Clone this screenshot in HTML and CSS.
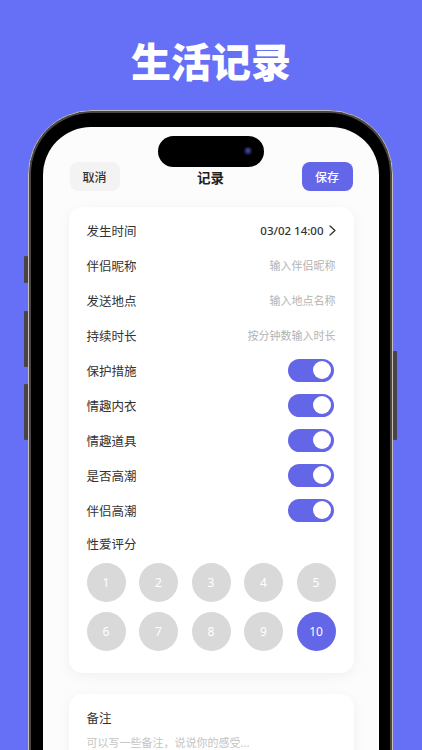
FILE: index.html
```html
<!DOCTYPE html>
<html lang="zh">
<head>
<meta charset="utf-8">
<title>生活记录</title>
<link rel="stylesheet" href="styles.css">
</head>
<body>
<header class="hero"><h1 class="hero-title">生活记录</h1></header>
<div class="phone">
  <span class="btn-side btn-l1"></span>
  <span class="btn-side btn-l2"></span>
  <span class="btn-side btn-l3"></span>
  <span class="btn-side btn-r1"></span>
  <div class="screen">
    <div class="island"><span class="cam"></span></div>
    <nav class="nav">
      <button class="nav-btn cancel">取消</button>
      <div class="nav-title">记录</div>
      <button class="nav-btn save">保存</button>
    </nav>
    <section class="card">
      <div class="row"><span class="label">发生时间</span><span class="value">03/02 14:00<svg class="chev" width="7" height="11" viewBox="0 0 7 11"><polyline points="1,1 6,5.5 1,10" fill="none" stroke="#333" stroke-width="1.3" stroke-linecap="round" stroke-linejoin="round"/></svg></span></div>
      <div class="row"><span class="label">伴侣昵称</span><span class="ph">输入伴侣昵称</span></div>
      <div class="row"><span class="label">发送地点</span><span class="ph">输入地点名称</span></div>
      <div class="row"><span class="label">持续时长</span><span class="ph">按分钟数输入时长</span></div>
      <div class="row"><span class="label">保护措施</span><span class="toggle"><span class="knob"></span></span></div>
      <div class="row"><span class="label">情趣内衣</span><span class="toggle"><span class="knob"></span></span></div>
      <div class="row"><span class="label">情趣道具</span><span class="toggle"><span class="knob"></span></span></div>
      <div class="row"><span class="label">是否高潮</span><span class="toggle"><span class="knob"></span></span></div>
      <div class="row"><span class="label">伴侣高潮</span><span class="toggle"><span class="knob"></span></span></div>
      <div class="row row-head"><span class="label">性爱评分</span></div>
      <div class="rating">
        <span class="dot">1</span><span class="dot">2</span><span class="dot">3</span><span class="dot">4</span><span class="dot">5</span>
        <span class="dot">6</span><span class="dot">7</span><span class="dot">8</span><span class="dot">9</span><span class="dot on">10</span>
      </div>
    </section>
    <section class="card note">
      <div class="note-title">备注</div>
      <div class="note-ph">可以写一些备注，说说你的感受...</div>
    </section>
  </div>
</div>
</body>
</html>
```
FILE: styles.css
```css
html, body {
  margin: 0;
  padding: 0;
  overflow: hidden;
  height: 750px;
}
body {
  background: #6670f7;
  font-family: "Noto Sans CJK SC", "Noto Sans", sans-serif;
}
.hero {
  height: 110px;
  box-sizing: border-box;
  padding-top: 40px;
}
.hero-title {
  margin: 0;
  text-align: center;
  color: #fff;
  font-size: 40px;
  line-height: 40px;
  font-weight: 900;
}
.phone {
  position: relative;
  margin-left: 28px;
  width: 365px;
  height: 720px;
  box-sizing: border-box;
  background: #000;
  border: 1.5px solid #c4bfbd;
  box-shadow: inset 0 0 0 2px #4a4443;
  border-radius: 64px;
  padding: 15.5px 13.5px 0;
}
.btn-side {
  position: absolute;
  width: 4px;
  background: #4a4544;
  border-radius: 1px;
}
.btn-l1 { left: -5px; top: 145px; height: 27px; }
.btn-l2 { left: -5px; top: 200px; height: 56px; }
.btn-l3 { left: -5px; top: 273px; height: 56px; }
.btn-r1 { right: -5px; top: 240px; height: 89px; }
.screen {
  position: relative;
  height: 100%;
  background: #fdfcfd;
  border-radius: 48px 48px 0 0;
  padding: 35px 25px 0 26px;
  box-sizing: border-box;
}
.island {
  position: absolute;
  top: 9px;
  left: 50%;
  margin-left: -53px;
  width: 106px;
  height: 31px;
  border-radius: 16px;
  background: #000;
}
.cam {
  position: absolute;
  right: 12px;
  top: 11.5px;
  width: 8px;
  height: 8px;
  border-radius: 50%;
  background: radial-gradient(circle at 50% 45%, #4a56a8 0, #1e2350 45%, #0c0d1c 100%);
}
.nav {
  display: flex;
  align-items: center;
  justify-content: space-between;
  height: 29px;
  padding-left: 1px;
  margin-right: 1px;
}
.nav-btn {
  border: 0;
  width: 50px;
  height: 29px;
  border-radius: 8px;
  font-family: inherit;
  font-size: 12px;
  font-weight: 500;
  padding: 0;
}
.cancel { background: #f3f3f4; color: #333; }
.save { background: #6366e6; color: #fff; width: 51px; }
.nav-title {
  font-size: 13.5px;
  font-weight: 700;
  color: #222;
  padding-top: 2px;
}
.card {
  margin-top: 16px;
  background: #fff;
  border-radius: 14px;
  box-shadow: 0 3px 14px rgba(0, 0, 0, 0.05);
  padding: 6px 18px 22px;
}
.row {
  display: flex;
  align-items: center;
  justify-content: space-between;
  height: 35px;
}
.row-head { height: 25px; margin-top: 3px; }
.label {
  font-size: 12.5px;
  color: #333;
}
.value {
  display: flex;
  align-items: center;
  font-size: 11.5px;
  font-weight: 500;
  color: #333;
  font-family: "Noto Sans", "Noto Sans CJK SC", sans-serif;
}
.chev { margin-left: 5px; }
.ph {
  font-size: 11px;
  color: #b3b3b3;
}
.toggle {
  position: relative;
  width: 46px;
  height: 23px;
  border-radius: 12px;
  background: #6366e6;
  margin-right: 2px;
}
.knob {
  position: absolute;
  right: 3px;
  top: 2.5px;
  width: 18px;
  height: 18px;
  border-radius: 50%;
  background: #fff;
}
.rating {
  display: grid;
  grid-template-columns: repeat(5, 39px);
  justify-content: space-between;
  row-gap: 10px;
  margin-top: 7px;
}
.dot {
  width: 39px;
  height: 39px;
  border-radius: 50%;
  background: #d9d9d9;
  color: #fff;
  font-size: 12px;
  font-family: "Noto Sans", sans-serif;
  display: flex;
  align-items: center;
  justify-content: center;
}
.dot.on { background: #6366e6; }
.note {
  margin-top: 21px;
  padding-top: 15px;
}
.note-title {
  font-size: 12.5px;
  color: #333;
  height: 18px;
  line-height: 18px;
}
.note-ph {
  margin-top: 7px;
  font-size: 11px;
  color: #c4c4c4;
}
```
